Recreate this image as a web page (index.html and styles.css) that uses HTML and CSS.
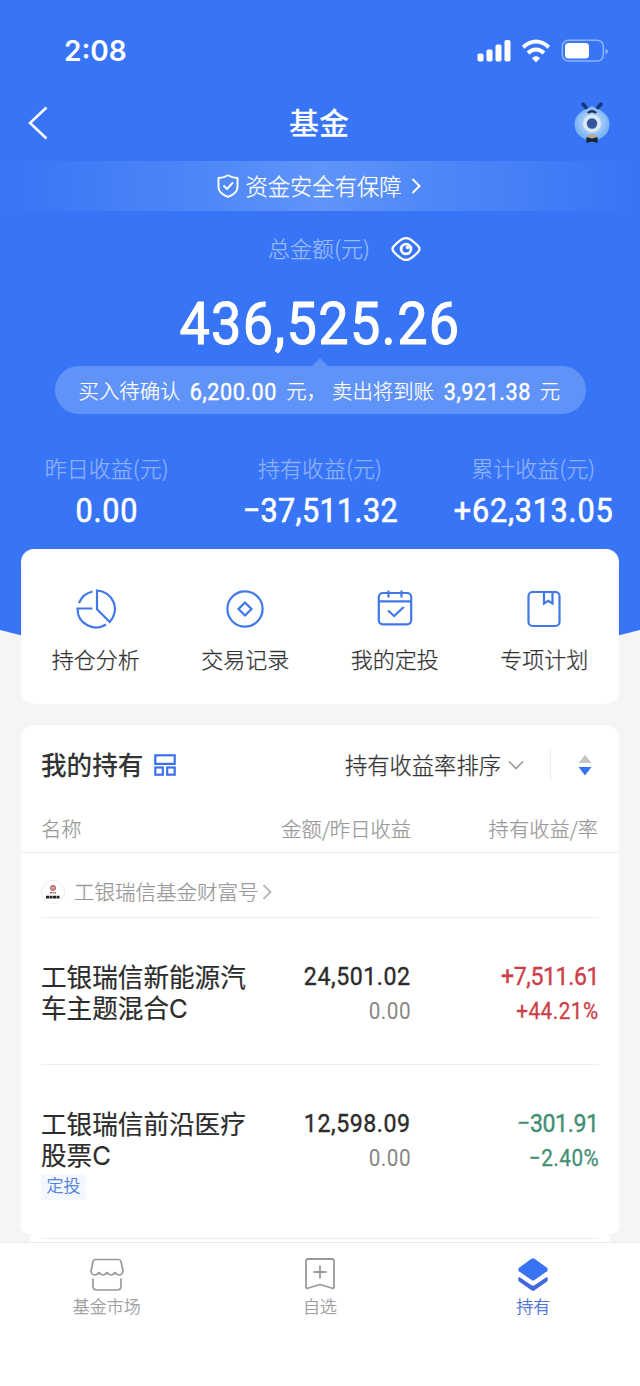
FILE: index.html
```html
<!DOCTYPE html>
<html lang="zh-CN">
<head>
<meta charset="utf-8">
<title>基金</title>
<link rel="stylesheet" href="styles.css">
</head>
<body>
<div class="page">
  <header class="hero">
    <div class="status">
      <span class="time">2:08</span>
      <svg class="status-icons" width="132" height="24" viewBox="0 0 132 24">
        <g fill="#fff">
          <rect x="1.500" y="14.500" width="6" height="8" rx="1.8"/><rect x="10.500" y="10.500" width="6" height="12" rx="1.8"/><rect x="19.500" y="5.500" width="6" height="17" rx="1.8"/><rect x="28.500" y="1" width="6" height="21.500" rx="1.8"/>
          <path d="M60 23.500 55.800 19Q60 15.400 64.200 19Z"/>
        </g>
        <g fill="none" stroke="#fff" stroke-width="4"><path d="M47.200 8.200Q60-3.200 72.800 8.200"/><path d="M52 14Q60 7 68 14"/></g>
        <rect x="86.300" y="1.300" width="41" height="20.800" rx="6" fill="none" stroke="#8fb3fa" stroke-width="1.500"/>
        <rect x="89" y="4" width="24" height="15.400" rx="3.500" fill="#fff"/>
        <path d="M129.500 9.500v6Q131.800 14.500 131.800 12.500T129.500 9.500Z" fill="#8fb3fa"/>
      </svg>
    </div>
    <div class="nav">
      <svg width="22" height="36" viewBox="0 0 22 36"><path d="M19.500 2.500 3 18l16.500 15.500" fill="none" stroke="#fff" stroke-width="2.500"/></svg>
      <h1>基金</h1>
      <svg width="36" height="42" viewBox="0 0 36 42">
        <defs><radialGradient id="face"><stop offset=".35" stop-color="#b7d8fb"/><stop offset="1" stop-color="#76b0f4"/></radialGradient></defs>
        <path d="M18 4Q22 6 25 7.500C33 12 35.500 17 35.500 22 35.500 32 28 38 18 38S.5 32 .5 22C.5 17 3 12 11 7.500Q14 6 18 4Z" fill="url(#face)"/>
        <path d="M9 2.200 12 5.500M27 2.200 24 5.500" stroke="#17386f" stroke-width="3.600" stroke-linecap="round"/>
        <path d="M13.800 11Q18 7.500 22.200 11" fill="none" stroke="#163153" stroke-width="2.200"/>
        <circle cx="18" cy="21.500" r="9" fill="#dbe7f7"/><circle cx="18" cy="21.500" r="5.200" fill="#35569b"/>
        <path d="M14.500 32.500h7v3h-7z" fill="#c8a684"/><path d="M12.500 35 18 36.500l5.500-1.500V41L18 39.500 12.500 41Z" fill="#1a2230"/>
      </svg>
    </div>
    <div class="safety">
      <svg width="22" height="24" viewBox="0 0 22 24" fill="none" stroke="#fff" stroke-width="1.900" stroke-linejoin="round"><path d="M11 1.200Q15.500 4 20.500 4V13Q20.500 19.500 11 22.800 1.500 19.500 1.500 13V4Q6.500 4 11 1.200Z"/><path d="m6.500 11.500 3.500 3.500 6-6.500"/></svg>
      <span>资金安全有保障</span>
      <svg class="safety-arrow" width="10" height="16" viewBox="0 0 10 16"><path d="m1.500 1 7 7-7 7" fill="none" stroke="#fff" stroke-width="1.900"/></svg>
    </div>
    <div class="total-label">
      <span>总金额(元)</span>
      <svg width="30" height="24" viewBox="0 0 30 24"><path d="M2.500 9.600Q7.500 3.800 12 1.700 15 .6 18 1.700 22.500 3.800 27.500 9.600 29.500 12 27.500 14.400 22.500 20.200 18 22.300 15 23.400 12 22.300 7.500 20.200 2.500 14.400.5 12 2.500 9.600Z" fill="none" stroke="#fff" stroke-width="2.300"/><circle cx="15" cy="12" r="4.900" fill="none" stroke="#fff" stroke-width="2.800"/><circle cx="16.500" cy="10.500" r="1.800" fill="#fff"/></svg>
    </div>
    <div class="amount num">436,525.26</div>
    <div class="pending">
      <span>买入待确认</span><b class="num">6,200.00</b><span>元，</span><span class="sell">卖出将到账</span><b class="num">3,921.38</b><span>元</span>
    </div>
    <div class="stats">
      <div class="stat"><span>昨日收益(元)</span><b class="num">0.00</b></div>
      <div class="stat"><span>持有收益(元)</span><b class="num snug">−37,511.32</b></div>
      <div class="stat"><span>累计收益(元)</span><b class="num">+62,313.05</b></div>
    </div>
  </header>

  <nav class="quick">
    <a><svg width="40" height="40" viewBox="0 0 40 40"><path d="M21 1.500v18.700L33.700 33A18.600 18.600 0 0 0 21 1.500ZM16.500 2.500A19 19 0 0 0 3 14M16.500 19.500H1.500A18.500 18.500 0 0 0 30 35.500"/></svg>持仓分析</a>
    <a><svg width="40" height="40" viewBox="0 0 40 40"><circle cx="20" cy="20" r="17.600"/><path d="m20 13.500 6.500 6.500-6.500 6.500-6.500-6.500Z"/></svg>交易记录</a>
    <a><svg width="40" height="40" viewBox="0 0 40 40"><rect x="3.800" y="4" width="32.400" height="31.300" rx="4"/><path d="M4 12.300h32M13.500 1.500v7M26.500 1.500v7M13 21.500l6.200 5.500 9.500-9"/></svg>我的定投</a>
    <a><svg width="40" height="40" viewBox="0 0 40 40"><rect x="4.500" y="3" width="31" height="34" rx="4"/><path d="M20 3.500v11l4.300-2.700 4.200 2.700v-11"/></svg>专项计划</a>
  </nav>

  <main class="holdings">
    <div class="head">
      <h2>我的持有</h2>
      <svg class="layout" width="22" height="22" viewBox="0 0 22 22" fill="none" stroke="#3a70ee" stroke-width="2.200"><rect x="1.300" y="1.300" width="19.400" height="8.600"/><rect x="1.300" y="13.500" width="7.500" height="7.200"/><rect x="13.200" y="13.500" width="7.500" height="7.200"/></svg>
      <span class="sort">持有收益率排序</span>
      <svg class="chev" width="16" height="10" viewBox="0 0 16 10"><path d="m1 1.500 7 7 7-7" fill="none" stroke="#999" stroke-width="1.600"/></svg>
      <svg class="order" width="14" height="22" viewBox="0 0 14 22"><path d="M7 .8 13.500 9H.5Z" fill="#c5c5c5"/><path d="M7 21.500.5 13h13Z" fill="#3574ee"/></svg>
    </div>
    <div class="cols"><span>名称</span><span>金额/昨日收益</span><span>持有收益/率</span></div>
    <div class="house">
      <svg width="24" height="24" viewBox="0 0 24 24"><circle cx="12" cy="12" r="11.500" fill="#fff" stroke="#ececec"/><circle cx="12" cy="8" r="3" fill="#b96363"/><path d="M10.200 7.300h3.600M10.200 9h3.600" stroke="#fff" stroke-width=".6"/><path d="M9 12.800h6" stroke="#a65c5c" stroke-width="1.500" stroke-dasharray="2 .5"/><path d="M5 17.200h14" stroke="#222" stroke-width="2.800" stroke-dasharray="3 .5"/></svg>
      <span>工银瑞信基金财富号</span>
      <svg width="10" height="16" viewBox="0 0 10 16"><path d="m1.500 1 7 7-7 7" fill="none" stroke="#bbb" stroke-width="2"/></svg>
    </div>
    <article class="fund">
      <div class="name">工银瑞信新能源汽<br>车主题混合C</div>
      <div class="cell"><b class="num">24,501.02</b><small class="num">0.00</small></div>
      <div class="cell up"><b class="num tight">+7,511.61</b><small class="num">+44.21%</small></div>
    </article>
    <article class="fund">
      <div class="name">工银瑞信前沿医疗<br>股票C<em class="tag">定投</em></div>
      <div class="cell"><b class="num">12,598.09</b><small class="num">0.00</small></div>
      <div class="cell down"><b class="num tight">−301.91</b><small class="num">−2.40%</small></div>
    </article>
  </main>
  <div class="next"></div>

  <footer class="tabs">
    <a><svg width="36" height="36" viewBox="0 0 36 36" fill="none" stroke="#999" stroke-width="1.700" stroke-linejoin="round"><path d="M6.500 2.500h23Q31.500 2.500 32 4.500L34 14Q33.500 18 30 18 27.500 18 26 15.500 24.500 18 22 18T18 15.500Q16.500 18 14 18T10 15.500Q8.500 18 6 18 2.500 18 2 14L4 4.500Q4.500 2.500 6.500 2.500ZM4 21.500V29Q4 33 8 33H28Q32 33 32 29V21.500"/></svg>基金市场</a>
    <a><svg width="36" height="36" viewBox="0 0 36 36" fill="none" stroke="#999" stroke-width="1.800" stroke-linejoin="round"><path d="M6 2H30Q32 2 32 4V29.500Q32 32 29.500 31L18 27.500 6.500 31Q4 32 4 29.500V4Q4 2 6 2ZM18 8.500v13M11.500 15h13"/></svg>自选</a>
    <a class="on"><svg width="36" height="36" viewBox="0 0 36 36" fill="#3873f3"><path d="M16.500 1.700Q18 .8 19.500 1.700L32 10.800Q33.500 12.500 32 14.200L19.500 23Q18 24 16.500 23L4 14.200Q2.500 12.500 4 10.800Z"/><path d="M3.300 21Q3.300 19.500 5 20.600L16.500 28.300Q18 29.200 19.500 28.300L31 20.600Q32.700 19.500 32.700 21V23Q32.700 24 31.700 24.700L19.500 33.200Q18 34.200 16.500 33.200L4.300 24.700Q3.300 24 3.300 23Z" fill="#4068de"/></svg>持有</a>
  </footer>
</div>
</body>
</html>
```

FILE: styles.css
```css
* { box-sizing: border-box; }
body { margin: 0; background: #f5f5f5; font-family: "Noto Sans CJK SC", sans-serif; font-weight: 300; color: #333; -webkit-text-stroke: .25px; }
.page { width: 640px; height: 1386px; overflow: hidden; display: flex; flex-direction: column; }
.page > * { flex-shrink: 0; }
svg { display: block; flex-shrink: 0; }
h1, h2 { margin: 0; font-weight: 500; -webkit-text-stroke: 0; }
.num { font-family: Roboto, sans-serif; font-weight: 400; letter-spacing: .025em; transform: scaleX(.9); -webkit-text-stroke: .018em; }
.num.snug { letter-spacing: .011em; }
.num.tight { letter-spacing: -.017em; }

.hero { height: 670px; background: #3875f6; color: #fff; clip-path: polygon(0 0, 100% 0, 100% 630px, 620px 635px, 50% 670px, 20px 635px, 0 630px); }
.status { height: 100px; padding: 2px 32px 0 64px; display: flex; align-items: center; justify-content: space-between; }
.time { font: 600 28px "Inter", sans-serif; -webkit-text-stroke: 0; }
.nav { height: 61px; padding: 0 30px 15px 27px; display: flex; align-items: center; justify-content: space-between; }
.nav h1 { font-size: 30px; line-height: 40px; padding: 0 0 5px 15px; }
.safety { height: 50px; display: flex; align-items: center; justify-content: center; background: linear-gradient(90deg, #3875f6 1%, #4c86f7 30%, #5f94f8 50%, #4c86f7 70%, #3875f6 99%); font-size: 22.300px; padding-right: 2px; }
.safety span { margin: -2px 9px 0 6px; line-height: 32px; }
.total-label { height: 75px; padding-left: 268px; display: flex; align-items: center; font-size: 22px; color: #9abafa; }
.total-label span { margin-top: -3px; }
.total-label svg { margin-left: 21px; }
.amount { height: 80px; line-height: 75px; font-size: 60px; text-align: center; }
.pending { position: relative; width: 531px; height: 48px; margin: 0 auto; border-radius: 24px; background: #5f93f8; display: flex; align-items: center; padding-left: 24px; font-size: 20.400px; white-space: nowrap; }
.pending::before { content: ""; position: absolute; left: 257px; top: -8px; border: solid transparent; border-width: 0 8px 8px; border-bottom-color: #5f93f8; }
.pending b { margin: 3px 4px 0 5px; font-size: 24px; }
.pending .sell { margin-left: 5px; }
.stats { padding-top: 37px; display: grid; grid-template-columns: repeat(3, 213.300px); }
.stat { display: flex; flex-direction: column; align-items: center; font-size: 22px; line-height: 32px; color: #8db1fa; white-space: nowrap; }
.stat b { color: #fff; font-size: 34px; line-height: 55px; }

.quick { position: relative; height: 155px; margin: -121px 21px 0; border-radius: 13px; background: #fff; display: grid; grid-template-columns: repeat(4, 149.500px); }
.quick a { padding-top: 40px; display: flex; flex-direction: column; align-items: center; font-size: 22px; line-height: 32px; }
.quick svg { margin-bottom: 13px; fill: none; stroke: #4178e8; stroke-width: 2.200; }

.holdings { margin: 21px 21px 0; height: 509px; border-radius: 13px 13px 10px 10px / 13px 13px 6px 6px; background: #fff; }
.head { height: 80px; padding: 0 27px 0 20px; display: flex; align-items: center; }
.head h2 { margin-top: -3px; font-size: 25.600px; }
.layout { margin-left: 11px; }
.sort { margin: -2px 0 0 auto; font-size: 22.300px; }
.chev { margin-left: 7px; }
.order { box-sizing: content-box; margin-left: 26px; padding: 5px 0 5px 27px; border-left: 1px solid #ededed; }
.cols { height: 48px; padding: 0 21px 0 20px; border-bottom: 1px solid #eee; display: grid; grid-template-columns: 170px 200px 1fr; font-size: 20.300px; line-height: 46px; color: #999; text-align: right; }
.cols span:first-child { text-align: left; }
.house { height: 65px; margin: 0 20px; padding-top: 14px; border-bottom: 1px solid #eee; display: flex; align-items: center; font-size: 20.500px; color: #999; }
.house span { margin: -2px 3px 0 9px; }
.fund { height: 146.500px; margin: 0 20px; padding-top: 43px; border-bottom: 1px solid #eee; display: grid; grid-template-columns: 220px 150px 1fr; }
.fund:last-child { border-bottom: 0; }
.name { margin-top: 1px; font-family: Inter, "Noto Sans CJK SC", sans-serif; font-size: 25.600px; font-weight: 400; line-height: 31px; color: #2c2c2c; -webkit-text-stroke: .2px #2c2c2c; white-space: nowrap; }
.tag { display: block; width: 45px; height: 26px; margin-top: 3px; background: #f3f7fe; color: #4378d8; font-size: 17px; font-weight: 300; line-height: 24px; font-style: normal; text-align: center; -webkit-text-stroke: .25px #4378d8; }
.cell { display: flex; flex-direction: column; align-items: flex-end; color: #2c2c2c; }
.cell .num { transform-origin: right; }
.cell b { font-size: 25.700px; line-height: 31px; -webkit-text-stroke: .4px; }
.cell small { font-size: 23px; line-height: 39px; color: #888; -webkit-text-stroke: 0; }
.up { color: #cc3f48; }
.down { color: #438f73; }
.up small, .down small { color: inherit; -webkit-text-stroke: .3px; }
.next { height: 8px; margin: 0 30px; background: linear-gradient(#eee, #eee) 11px 4px / 558px 1px no-repeat #fff; }

.tabs { height: 144px; border-top: 1px solid #ececec; background: #fff; display: grid; grid-template-columns: repeat(3, 1fr); }
.tabs a { padding-top: 14px; display: flex; flex-direction: column; align-items: center; font-size: 17px; line-height: 24px; color: #999; }
.tabs svg { margin-bottom: 1px; }
.tabs .on { color: #3d6bd6; }
```
